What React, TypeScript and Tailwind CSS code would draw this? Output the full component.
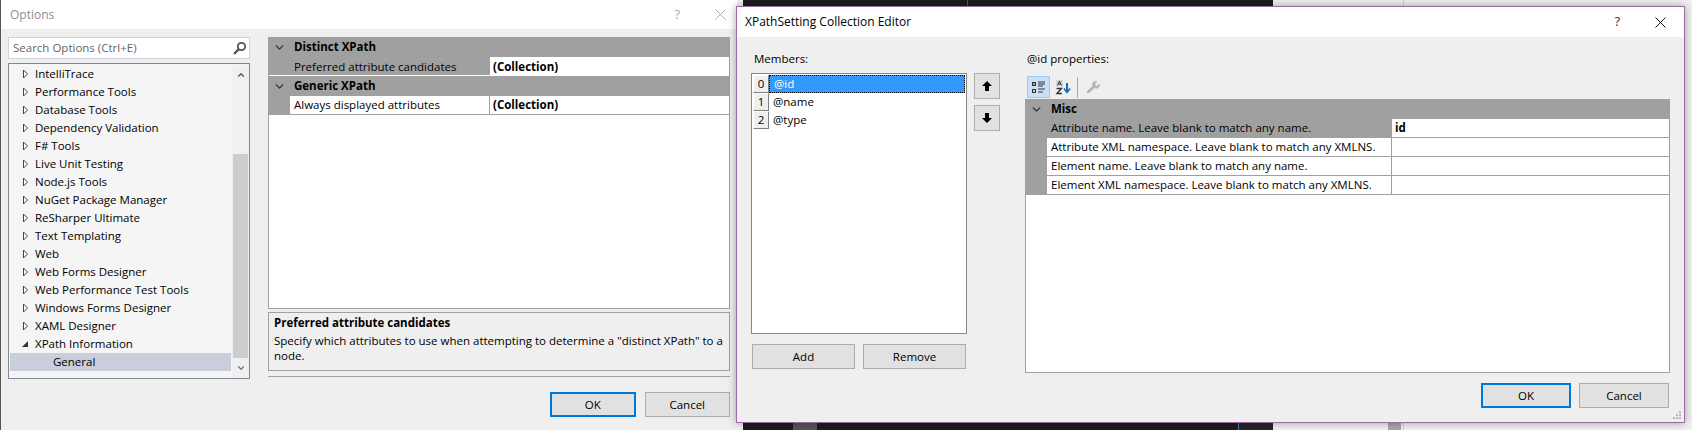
import { ChevronDown } from "lucide-react";

const font = "font-['Open_Sans',sans-serif]";

const treeItems = [
  "IntelliTrace",
  "Performance Tools",
  "Database Tools",
  "Dependency Validation",
  "F# Tools",
  "Live Unit Testing",
  "Node.js Tools",
  "NuGet Package Manager",
  "ReSharper Ultimate",
  "Text Templating",
  "Web",
  "Web Forms Designer",
  "Web Performance Test Tools",
  "Windows Forms Designer",
  "XAML Designer",
];

const miscRows = [
  "Attribute XML namespace. Leave blank to match any XMLNS.",
  "Element name. Leave blank to match any name.",
  "Element XML namespace. Leave blank to match any XMLNS.",
];

function Btn({ label, primary, className }: { label: string; primary?: boolean; className: string }) {
  return (
    <div
      className={`flex h-[25px] items-center justify-center bg-[#e1e1e1] text-[11.5px] text-black ${
        primary ? "border-2 border-[#0078d7]" : "border border-[#adadad]"
      } ${className}`}
    >
      {label}
    </div>
  );
}

function Caret({ open }: { open?: boolean }) {
  return (
    <svg width="9" height="10" viewBox="0 0 9 10" className="shrink-0">
      {open ? (
        <path d="M7 2v6H1z" fill="#333" />
      ) : (
        <path d="M2.500 1v8L6.500 5z" fill="#fff" stroke="#444" />
      )}
    </svg>
  );
}

function Chevron() {
  return <ChevronDown size={13} strokeWidth={2.5} className="text-[#333]" />;
}

function Group({ title }: { title: string }) {
  return (
    <div className="flex h-[20px] items-center bg-[#a0a0a0]">
      <div className="flex w-[21px] justify-center">
        <Chevron />
      </div>
      <span className="ml-[4px] text-[11.5px] font-bold text-black">{title}</span>
    </div>
  );
}

function OptionsDialog() {
  return (
    <div className="absolute top-0 left-0 h-[430px] w-[737px] border-l border-[#555] bg-[#efefef]">
      <div className="flex h-[29px] items-center justify-between bg-white pl-[9px] pr-[11px]">
        <span className="text-[12px] text-[#8f8f8f]">Options</span>
        <div className="flex items-center gap-[35px] text-[#aaa]">
          <span className="text-[13px]">?</span>
          <svg width="11" height="11" viewBox="0 0 11 11">
            <path d="M.5.5l10 10M10.500.5l-10 10" stroke="#aaa" fill="none" />
          </svg>
        </div>
      </div>
      <div className="flex pl-[7px] pt-[8px]">
        <div className="w-[242px]">
          <div className="flex h-[22px] items-center justify-between border border-[#cfd3e0] bg-white pl-[4px] pr-[2px]">
            <span className="text-[11.5px] text-[#666]">Search Options (Ctrl+E)</span>
            <svg width="15" height="15" viewBox="0 0 15 15">
              <circle cx="9.500" cy="5.500" r="3.700" fill="none" stroke="#555" strokeWidth="1.800" />
              <path d="M6.800 8.200L2 13" stroke="#555" strokeWidth="2.400" />
            </svg>
          </div>
          <div className="mt-[4px] flex h-[316px] border border-[#828790] bg-[#f5f5f5] pt-[1px] pl-[1px]">
            <div className="w-[222px] text-[11.5px] text-black">
              {treeItems.map((item) => (
                <div key={item} className="flex h-[18px] items-center pl-[11px]">
                  <Caret />
                  <span className="ml-[5px]">{item}</span>
                </div>
              ))}
              <div className="flex h-[18px] items-center pl-[11px]">
                <Caret open />
                <span className="ml-[5px]">XPath Information</span>
              </div>
              <div className="flex h-[18px] items-center bg-[#c9cddc] pl-[43px]">General</div>
            </div>
            <div className="ml-[1px] flex w-[17px] flex-col items-center bg-[#f0f0f0]">
              <div className="flex h-[20px] items-center">
                <ChevronDown size={10} strokeWidth={3} className="rotate-180 text-[#555]" />
              </div>
              <div className="mt-[69px] h-[205px] w-[15px] bg-[#cdcdcd]" />
              <div className="flex h-[20px] items-center">
                <ChevronDown size={10} strokeWidth={3} className="text-[#777]" />
              </div>
            </div>
          </div>
        </div>
        <div className="ml-[18px] w-[462px]">
          <div className="h-[272px] border-r border-b border-l border-[#a0a0a0] bg-white text-[11.5px] text-black">
            <Group title="Distinct XPath" />
            <div className="flex h-[19px] border-b border-white bg-[#a0a0a0]">
              <div className="flex w-[221px] items-center pl-[25px] pt-[1px]">Preferred attribute candidates</div>
              <div className="flex flex-1 items-center bg-white pl-[3px] pt-[1px] font-bold">(Collection)</div>
            </div>
            <Group title="Generic XPath" />
            <div className="flex h-[19px] border-b border-[#a0a0a0]">
              <div className="w-[21px] bg-[#a0a0a0]" />
              <div className="flex w-[200px] items-center border-r border-[#a0a0a0] pl-[4px]">Always displayed attributes</div>
              <div className="flex flex-1 items-center pl-[3px] font-bold">(Collection)</div>
            </div>
          </div>
          <div className="mt-[3px] h-[59px] border border-[#a0a0a0] pl-[5px] pt-[1px] text-[11.5px] leading-[15px] text-black">
            <div className="font-bold leading-[17px]">Preferred attribute candidates</div>
            <div className="pt-[2px]">
              Specify which attributes to use when attempting to determine a "distinct XPath" to a node.
            </div>
          </div>
          <div className="mt-[5px] h-[1px] bg-[#a0a0a0]" />
          <div className="mt-[15px] flex">
            <Btn label="OK" primary className="ml-[282px] w-[86px]" />
            <Btn label="Cancel" className="ml-[9px] w-[86px]" />
          </div>
        </div>
      </div>
    </div>
  );
}

function ToolbarIcons() {
  return (
    <div className="flex h-[24px] items-center">
      <div className="flex h-[22px] w-[23px] items-center justify-center border border-[#9fc8ee] bg-[#c9e0f7]">
        <svg width="15" height="15" viewBox="0 0 15 15">
          <path d="M1 2h4v4H1zM1 9h4v4H1z" fill="#333" />
          <path d="M2 4h2M2 11h2M3 10v2" stroke="#fff" />
          <path d="M7 2h7M7 4h7M7 6h5M7 9h7M7 12h5" stroke="#333" />
        </svg>
      </div>
      <div className="flex h-[22px] w-[25px] items-center justify-center">
        <svg width="16" height="16" viewBox="0 0 16 16">
          <path d="M1 1h7v6H1z" fill="#d4d4d4" />
          <path d="M2.500 6.500L4.500 2l2 4.500M3.200 5h2.600" fill="none" stroke="#333" />
          <path d="M1.500 9.500h5l-4.500 5h5" fill="none" stroke="#333" strokeWidth="1.400" />
          <path d="M12 4v9" stroke="#0e70c0" strokeWidth="2" />
          <path d="M9 9.500l3 4 3-4" fill="none" stroke="#0e70c0" strokeWidth="1.600" />
        </svg>
      </div>
      <div className="mx-[2px] h-[21px] w-[1px] bg-[#a8a8a8]" />
      <div className="ml-[4px] flex h-[22px] w-[18px] items-center justify-center">
        <svg width="14" height="14" viewBox="0 0 14 14">
          <path d="M1 13l0-2 5.500-5a3.500 3.500 0 0 1 5-4.500L9 4l1 1.500 1 .5 2.500-2.500a3.500 3.500 0 0 1-5 4.500L3 13z" fill="#b5b5b5" />
        </svg>
      </div>
    </div>
  );
}

function MoveButton({ down }: { down?: boolean }) {
  return (
    <div className="flex h-[26px] items-center justify-center border border-[#adadad] bg-[#e1e1e1]">
      <svg width="10" height="10" viewBox="0 0 10 10" className={down ? "rotate-180" : ""}>
        <path d="M5 0l5 5H7v5H3V5H0z" fill="#000" />
      </svg>
    </div>
  );
}

function CollectionDialog() {
  const members = ["@id", "@name", "@type"];
  return (
    <div className="absolute top-[6px] left-[736px] h-[417px] w-[949px] border border-[#9b6aa6] bg-[#efefef] shadow-[0_0_8px_rgba(0,0,0,0.35)]">
      <div className="flex h-[30px] items-center justify-between bg-white pl-[8px] pr-[18px]">
        <span className="text-[12px] text-black">XPathSetting Collection Editor</span>
        <div className="flex items-center gap-[35px]">
          <span className="text-[13px] text-[#333]">?</span>
          <svg width="11" height="11" viewBox="0 0 11 11">
            <path d="M.5.5l10 10M10.500.5l-10 10" stroke="#111" fill="none" />
          </svg>
        </div>
      </div>
      <div className="flex pl-[14px] pt-[14px] text-[11.5px] text-black">
        <div className="w-[216px]">
          <div className="h-[22px] pl-[3px] leading-[16px]">Members:</div>
          <div className="h-[261px] border border-[#828790] bg-white pl-[1px] pt-[1px]">
            {members.map((m, i) => (
              <div key={m} className="flex h-[18px]">
                <div className="flex w-[16px] items-center justify-center border-t border-r border-b border-l border-t-white border-r-[#808080] border-b-[#808080] border-l-white bg-[#efefef]">
                  {i}
                </div>
                <div
                  className={`flex flex-1 items-center pl-[4px] ${
                    i === 0 ? "mr-[1px] border border-dotted border-black bg-[#3399ff] text-white" : ""
                  }`}
                >
                  {m}
                </div>
              </div>
            ))}
          </div>
          <div className="mt-[10px] flex gap-[8px] pl-[1px]">
            <Btn label="Add" className="w-[103px]" />
            <Btn label="Remove" className="w-[103px]" />
          </div>
        </div>
        <div className="ml-[7px] w-[26px] pt-[22px]">
          <MoveButton />
          <div className="mt-[6px]">
            <MoveButton down />
          </div>
        </div>
        <div className="ml-[25px] w-[645px]">
          <div className="h-[23px] pl-[2px] leading-[16px]">@id properties:</div>
          <div className="flex h-[25px] items-center pl-[2px] pt-[1px]">
            <ToolbarIcons />
          </div>
          <div className="h-[274px] border-r border-b border-l border-[#a0a0a0] bg-white">
            <Group title="Misc" />
            <div className="flex h-[19px] border-b border-[#a0a0a0] bg-[#a0a0a0]">
              <div className="flex w-[366px] items-center pl-[25px]">Attribute name. Leave blank to match any name.</div>
              <div className="flex flex-1 items-center bg-white pl-[3px] font-bold">id</div>
            </div>
            {miscRows.map((row) => (
              <div key={row} className="flex h-[19px] border-b border-[#a0a0a0]">
                <div className="w-[21px] bg-[#a0a0a0]" />
                <div className="flex w-[345px] items-center border-r border-[#a0a0a0] pl-[4px]">{row}</div>
              </div>
            ))}
          </div>
          <div className="mt-[10px] flex">
            <Btn label="OK" primary className="ml-[456px] w-[90px]" />
            <Btn label="Cancel" className="ml-[8px] w-[90px]" />
          </div>
        </div>
      </div>
      <svg width="9" height="9" viewBox="0 0 9 9" className="absolute right-[2px] bottom-[2px]">
        <path d="M6 0h2v2H6zM3 3h2v2H3zM6 3h2v2H6zM0 6h2v2H0zM3 6h2v2H3zM6 6h2v2H6z" fill="#b8b8b8" />
      </svg>
    </div>
  );
}

// the IDE window that peeks out above and below the dialogs
function IdeBehind() {
  return (
    <>
      <div className="absolute top-0 left-[743px] h-[430px] w-[530px] bg-[#1c1c1c]" />
      <div className="absolute top-[423px] left-[793px] h-[7px] w-[24px] bg-[#555]" />
      <div className="absolute top-[423px] left-[1238px] h-[7px] w-[35px] border-l border-[#4a7fb0] bg-[#252526]" />
      <div className="absolute top-0 left-[967px] h-[6px] w-[1px] bg-[#555]" />
      <div className="absolute top-[423px] left-[1388px] h-[7px] w-[13px] bg-[#a8a8a8]" />
      <div className="absolute top-0 left-[1403px] h-[430px] w-[1px] bg-[#d0d0d0]" />
    </>
  );
}

export default function App() {
  return (
    <div className={`relative h-[430px] w-[1692px] overflow-hidden bg-[#f0f0f0] ${font}`}>
      <OptionsDialog />
      <IdeBehind />
      <CollectionDialog />
    </div>
  );
}
